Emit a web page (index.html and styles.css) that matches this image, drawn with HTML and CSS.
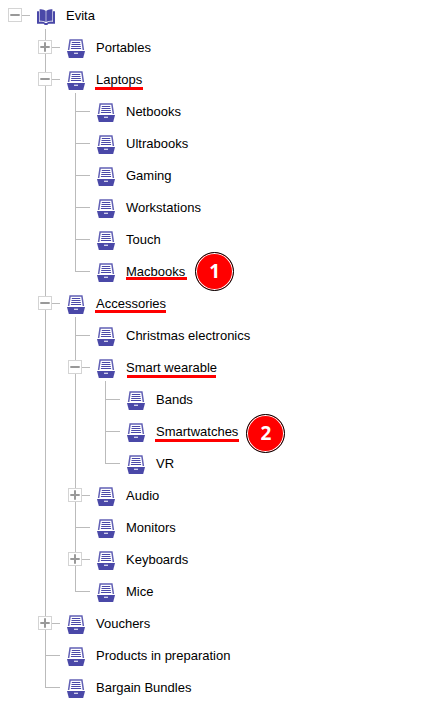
FILE: index.html
```
<!DOCTYPE html>
<html lang="en">
<head>
<meta charset="utf-8">
<title>Evita</title>
<link rel="stylesheet" href="styles.css">
</head>
<body>
<svg width="0" height="0" class="defs">
  <symbol id="tray" viewBox="0 0 18 19">
    <path class="edge" d="M1.6 11L3.1 1.1h11.8L16.4 11"/>
    <path class="rules" d="M4.8 3.5h8.4M4.5 5.5h9M4.2 7.5h9.6M3.9 9.5h10.2"/>
    <path class="solid" d="M0 12h18l-1.8 7H1.8z"/>
    <path class="slot" d="M7 14.3h4"/>
  </symbol>
  <symbol id="book" viewBox="0 0 18 17">
    <path class="solid" d="M2.6 .2Q6.6-.2 8.7 1.7v11.4Q5.8 11.4 2.6 11.8zM15.4 .2Q11.4-.2 9.3 1.7v11.4Q12.2 11.4 15.4 11.8z"/>
    <path class="solid" d="M0 2.2h2v10.5q4.4-.5 6.3 1.3h1.4q1.9-1.8 6.3-1.3V2.2h2v12.6h-6.6L10.2 16H7.8l-1.2-1.2H0z"/>
  </symbol>
  <symbol id="minus" viewBox="0 0 12 12"><path class="sign" d="M1.3 6h9.4"/></symbol>
  <symbol id="plus" viewBox="0 0 12 12"><path class="sign" d="M1.3 6h9.4M6 1.3v9.4"/></symbol>
</svg>
<ul class="tree">
  <li class="root">
    <div class="row open"><svg class="toggle"><use href="#minus"/></svg><svg class="book"><use href="#book"/></svg><span class="label">Evita</span></div>
    <ul>
      <li><div class="row"><svg class="toggle"><use href="#plus"/></svg><svg class="icon"><use href="#tray"/></svg><span class="label">Portables</span></div></li>
      <li><div class="row open"><svg class="toggle"><use href="#minus"/></svg><svg class="icon"><use href="#tray"/></svg><span class="label marked laptops">Laptops</span></div>
        <ul>
          <li><div class="row"><span class="toggle-space"></span><svg class="icon"><use href="#tray"/></svg><span class="label">Netbooks</span></div></li>
          <li><div class="row"><span class="toggle-space"></span><svg class="icon"><use href="#tray"/></svg><span class="label">Ultrabooks</span></div></li>
          <li><div class="row"><span class="toggle-space"></span><svg class="icon"><use href="#tray"/></svg><span class="label">Gaming</span></div></li>
          <li><div class="row"><span class="toggle-space"></span><svg class="icon"><use href="#tray"/></svg><span class="label">Workstations</span></div></li>
          <li><div class="row"><span class="toggle-space"></span><svg class="icon"><use href="#tray"/></svg><span class="label">Touch</span></div></li>
          <li><div class="row"><span class="toggle-space"></span><svg class="icon"><use href="#tray"/></svg><span class="label marked macbooks">Macbooks</span><span class="badge first">1</span></div></li>
        </ul>
      </li>
      <li><div class="row open"><svg class="toggle"><use href="#minus"/></svg><svg class="icon"><use href="#tray"/></svg><span class="label marked accessories">Accessories</span></div>
        <ul>
          <li><div class="row"><span class="toggle-space"></span><svg class="icon"><use href="#tray"/></svg><span class="label">Christmas electronics</span></div></li>
          <li><div class="row open"><svg class="toggle"><use href="#minus"/></svg><svg class="icon"><use href="#tray"/></svg><span class="label marked wearable">Smart wearable</span></div>
            <ul>
              <li><div class="row"><span class="toggle-space"></span><svg class="icon"><use href="#tray"/></svg><span class="label">Bands</span></div></li>
              <li><div class="row"><span class="toggle-space"></span><svg class="icon"><use href="#tray"/></svg><span class="label marked watches">Smartwatches</span><span class="badge second">2</span></div></li>
              <li><div class="row"><span class="toggle-space"></span><svg class="icon"><use href="#tray"/></svg><span class="label">VR</span></div></li>
            </ul>
          </li>
          <li><div class="row"><svg class="toggle"><use href="#plus"/></svg><svg class="icon"><use href="#tray"/></svg><span class="label">Audio</span></div></li>
          <li><div class="row"><span class="toggle-space"></span><svg class="icon"><use href="#tray"/></svg><span class="label">Monitors</span></div></li>
          <li><div class="row"><svg class="toggle"><use href="#plus"/></svg><svg class="icon"><use href="#tray"/></svg><span class="label">Keyboards</span></div></li>
          <li><div class="row"><span class="toggle-space"></span><svg class="icon"><use href="#tray"/></svg><span class="label">Mice</span></div></li>
        </ul>
      </li>
      <li><div class="row"><svg class="toggle"><use href="#plus"/></svg><svg class="icon"><use href="#tray"/></svg><span class="label">Vouchers</span></div></li>
      <li><div class="row"><span class="toggle-space"></span><svg class="icon"><use href="#tray"/></svg><span class="label">Products in preparation</span></div></li>
      <li><div class="row"><span class="toggle-space"></span><svg class="icon"><use href="#tray"/></svg><span class="label">Bargain Bundles</span></div></li>
    </ul>
  </li>
</ul>
</body>
</html>
```
FILE: styles.css
```
body {
  margin: 0;
  background: #fff;
  color: #000;
  font: 13px/32px "Liberation Sans", Arial, sans-serif;
}
.defs { display: block; }
ul {
  list-style: none;
  margin: 0;
  padding: 0;
}
li > ul { margin-left: 30px; }

/* connector lines */
li {
  background: linear-gradient(#bbb, #bbb) 15px 0 / 1px 100% no-repeat;
}
li:last-child { background-size: 1px 16px; }
li.root { background: none; }
.row {
  display: flex;
  align-items: flex-start;
  height: 32px;
  background: linear-gradient(#bbb, #bbb) 15px 15px / 15px 1px no-repeat;
}
.row.open {
  background:
    linear-gradient(#bbb, #bbb) 15px 15px / 15px 1px no-repeat,
    linear-gradient(#bbb, #bbb) 45px 29px / 1px 3px no-repeat;
}

.toggle {
  box-sizing: border-box;
  width: 14px;
  height: 14px;
  margin: 8px 15px 0 8px;
  border: 1px solid #d4d4d4;
  background: #fff;
}
.toggle-space { width: 37px; }
.icon {
  width: 18px;
  height: 19px;
  margin: 7px 11px 0 0;
}
.book {
  width: 18px;
  height: 17px;
  margin: 9px 11px 0 0;
}
.label {
  position: relative;
  white-space: nowrap;
}
.solid { fill: #4a48a8; }
.edge { fill: none; stroke: #6260b5; stroke-width: 1.5; }
.rules { stroke: #4a48a8; stroke-width: 1.2; }
.slot { stroke: #d8d8ef; stroke-width: 1.3; }
.sign { stroke: #999; stroke-width: 2; }

/* annotations */
.marked::after {
  content: "";
  position: absolute;
  height: 3px;
  background: #f00;
}
.laptops::after { left: -1px; top: 22.5px; width: 48px; }
.macbooks::after { left: 0; top: 21px; width: 61px; }
.accessories::after { left: -1px; top: 22px; width: 71px; }
.wearable::after { left: 1px; top: 23px; width: 89px; }
.watches::after { left: -1px; top: 23px; width: 84px; }
.badge {
  box-sizing: border-box;
  width: 39px;
  height: 39px;
  border: 1.5px solid #000;
  border-radius: 50%;
  background: #f00;
  box-shadow: inset 0 0 0 1px #fff;
  color: #fff;
  font: bold 19px/36px "Open Sans", sans-serif;
  text-align: center;
}
.first { margin: -4.5px 0 0 10px; }
.second { margin: -2.5px 0 0 8px; }
```
